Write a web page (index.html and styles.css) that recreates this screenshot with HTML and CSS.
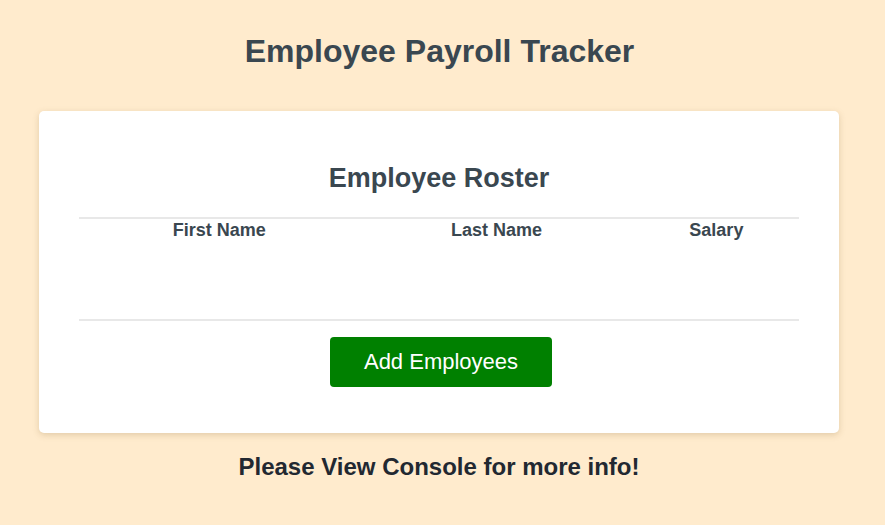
FILE: index.html
```html
<!DOCTYPE html>
<html lang="en">
<head>
<meta charset="UTF-8">
<title>Employee Payroll Tracker</title>
<link rel="stylesheet" href="styles.css">
</head>
<body>
  <header class="page-header">
    <h1 class="page-title">Employee Payroll Tracker</h1>
  </header>
  <main class="card">
    <h2 class="card-title">Employee Roster</h2>
    <table class="roster">
      <thead>
        <tr>
          <th class="col-first">First Name</th>
          <th class="col-last">Last Name</th>
          <th class="col-salary">Salary</th>
        </tr>
      </thead>
      <tbody class="roster-body"></tbody>
    </table>
    <div class="actions">
      <button class="add-btn" type="button">Add Employees</button>
    </div>
  </main>
  <p class="footer-note">Please View Console for more info!</p>
</body>
</html>
```
FILE: styles.css
```css
* { box-sizing: border-box; }
html, body {
  margin: 0;
  padding: 0;
}
body {
  background: #ffebcd;
  font-family: "Liberation Sans", Arial, sans-serif;
  color: #3a4750;
}
.page-header {
  padding: 33px 6px 0 0;
  text-align: center;
}
.page-title {
  margin: 0;
  font-size: 32px;
  line-height: 36px;
  font-weight: bold;
}
.card {
  margin: 42px 46px 0 39px;
  background: #fff;
  border-radius: 5px;
  box-shadow: 0 2px 6px rgba(140, 110, 60, 0.25);
  padding: 50px 40px 46px;
}
.card-title {
  margin: 0 0 22px;
  text-align: center;
  font-size: 27px;
  line-height: 34px;
  font-weight: bold;
}
.roster {
  width: 100%;
  border-collapse: collapse;
  table-layout: fixed;
  border-top: 2px solid #e8e8e8;
  border-bottom: 2px solid #e8e8e8;
}
.roster th {
  font-size: 18px;
  font-weight: bold;
  line-height: 22px;
  padding: 0 0 78px;
  text-align: center;
}
.col-first { width: 280px; }
.col-last { width: 274px; }
.col-salary { width: 165px; }
.actions {
  display: flex;
  justify-content: center;
  padding: 16px 0 0 4px;
}
.add-btn {
  width: 222px;
  height: 50px;
  background: #008000;
  color: #fff;
  border: none;
  border-radius: 4px;
  font-family: "Liberation Sans", Arial, sans-serif;
  font-size: 22px;
}
.footer-note {
  margin: 20px 0 0;
  padding-right: 7px;
  text-align: center;
  font-size: 24px;
  line-height: 28px;
  font-weight: bold;
  color: #222831;
}
```
